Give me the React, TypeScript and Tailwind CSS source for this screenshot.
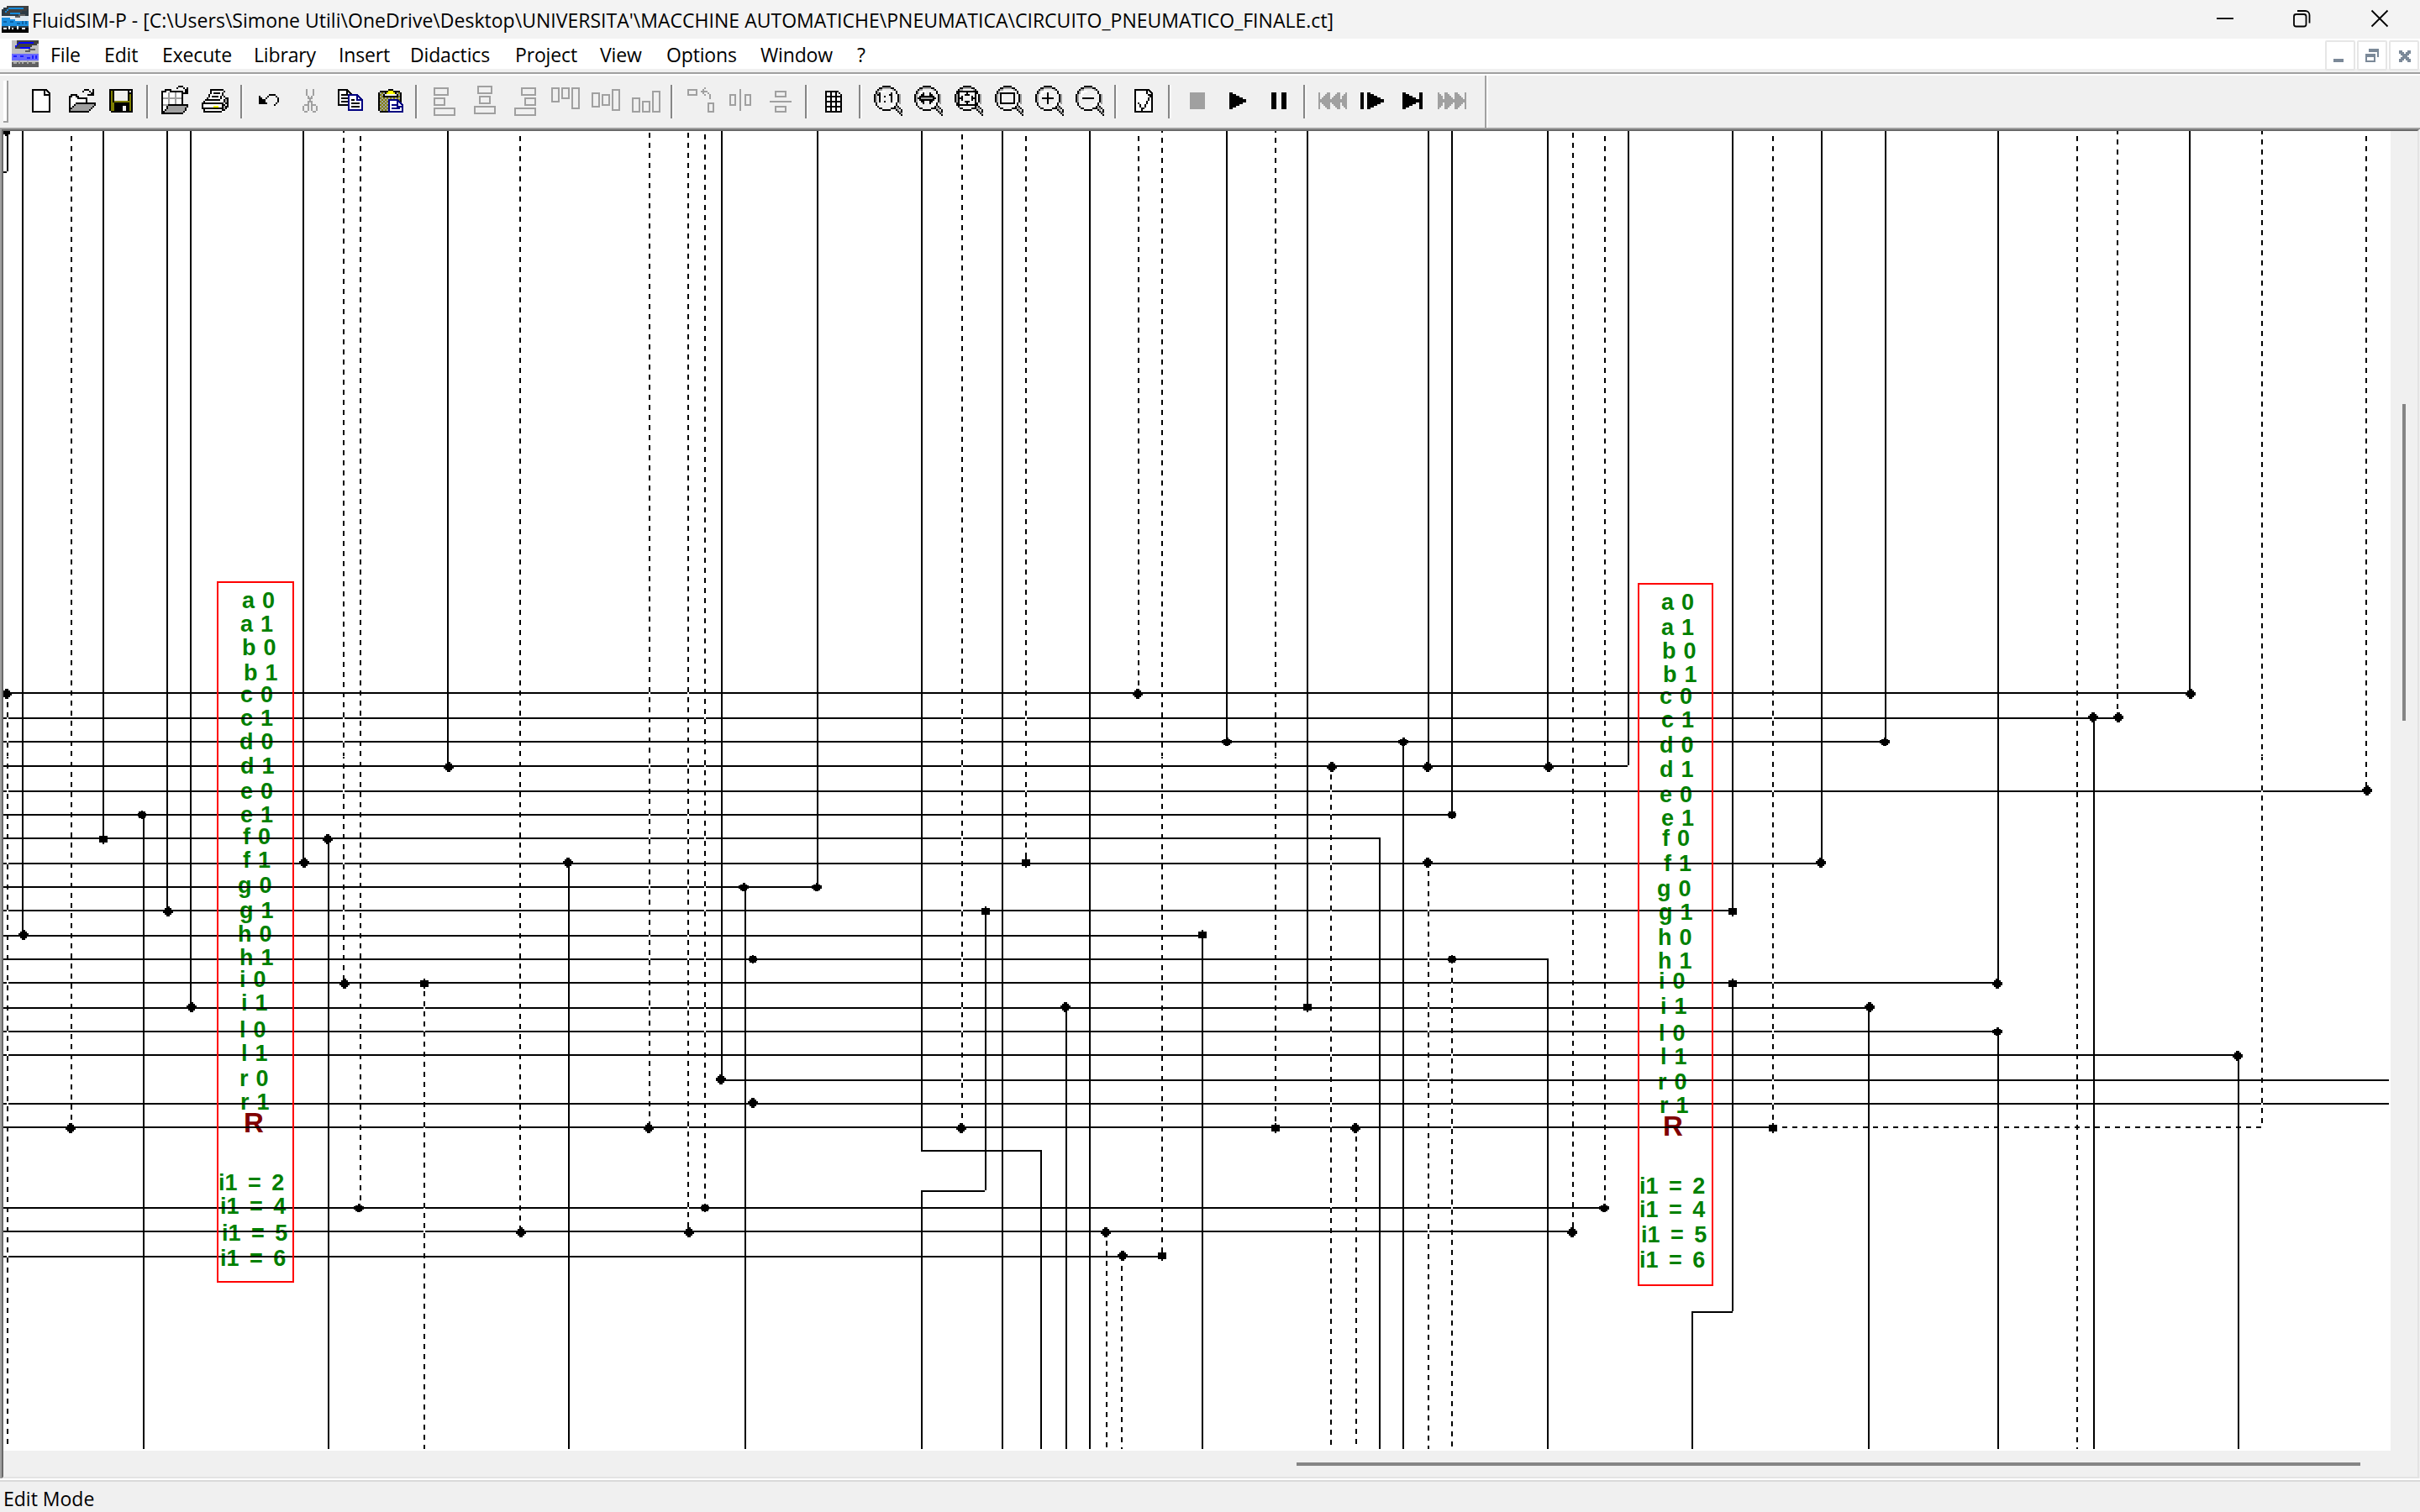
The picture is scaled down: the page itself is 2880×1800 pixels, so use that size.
import React from "react";

type Seg = [number, number, number];

const GRAY = "#a0a0a0";

/* ---------- circuit data ---------- */

// [y, x start, x end]
const horizontals: Seg[] = [
  [824, 4, 2605], [854, 4, 2519], [882, 4, 2243], [911, 4, 1937], [941, 4, 2815], [969, 4, 1728],
  [997, 4, 1643], [1027, 4, 2167], [1055, 4, 972], [1083, 4, 2061], [1113, 4, 1430], [1141, 4, 1843],
  [1169, 4, 2377], [1199, 4, 2223], [1227, 4, 2377], [1255, 4, 2663], [1285, 858, 2843], [1313, 4, 2843],
  [1341, 4, 2109], [1437, 4, 1909], [1465, 4, 1871], [1495, 4, 1382], [1369, 1096, 1240], [1417, 1096, 1172],
  [1561, 2013, 2062],
];

// [x, y start, y end]
const verticals: Seg[] = [
  [26, 156, 1113], [122, 156, 998], [198, 156, 1084], [226, 156, 1200], [360, 156, 1028], [532, 156, 912],
  [858, 156, 1286], [972, 156, 1056], [1096, 156, 1371], [1192, 156, 1725], [1296, 156, 1725], [1459, 156, 883],
  [1555, 156, 1199], [1699, 156, 912], [1727, 156, 970], [1841, 156, 912], [1937, 156, 911], [2061, 156, 1084],
  [2167, 156, 1028], [2243, 156, 883], [2377, 156, 1171], [2605, 156, 826],
  [170, 970, 1725], [390, 998, 1725], [676, 1028, 1725], [886, 1056, 1725], [1096, 1417, 1725], [1172, 1084, 1417],
  [1238, 1369, 1725], [1268, 1199, 1725], [1430, 1113, 1725], [1641, 997, 1725], [1669, 883, 1725],
  [1841, 1141, 1725], [2061, 1171, 1561], [2013, 1561, 1725], [2223, 1200, 1725], [2377, 1228, 1725],
  [2491, 855, 1725], [2663, 1256, 1725],
];

// [x, y start, y end, first dash, opaque gaps]
const dashed: [number, number, number, number, boolean][] = [
  [84, 156, 1342, 162, false], [408, 156, 1170, 152, true], [428, 156, 1438, 162, false],
  [618, 156, 1466, 162, false], [772, 156, 1342, 158, true], [818, 156, 1466, 158, true],
  [838, 156, 1438, 160, true], [1144, 156, 1342, 160, true], [1220, 156, 1027, 162, true],
  [1354, 156, 824, 162, false], [1382, 156, 1495, 152, false], [1517, 156, 1342, 152, false],
  [1871, 156, 1466, 158, false], [1909, 156, 1438, 162, false], [2109, 156, 1342, 162, true],
  [2471, 156, 1725, 162, false], [2519, 156, 854, 154, false], [2691, 156, 1341, 154, true],
  [2815, 156, 942, 162, false],
  [8, 828, 1725, 824, true], [504, 1172, 1725, 1168, true], [1316, 1468, 1725, 1465, false],
  [1334, 1497, 1725, 1495, false], [1583, 914, 1725, 910, true], [1613, 1343, 1725, 1341, false],
  [1699, 1029, 1725, 1025, true], [1727, 1143, 1725, 1140, true],
];

const nodes: Record<string, [number, number][]> = {
  d: [
    [8, 826], [534, 913], [362, 1027], [390, 999], [676, 1027], [200, 1085], [28, 1113], [228, 1199], [410, 1171],
    [84, 1343], [772, 1343], [896, 1313], [858, 1285], [620, 1467], [820, 1467], [1354, 826], [1585, 913],
    [1699, 913], [1699, 1027], [1268, 1199], [1144, 1343], [1613, 1343], [1316, 1467], [1336, 1495], [2607, 826],
    [2491, 854], [2521, 854], [1843, 913], [2167, 1027], [2377, 1171], [2225, 1199], [2663, 1257], [1871, 1467],
    [2817, 941],
  ],
  w: [[1460, 883], [885, 1056], [972, 1056], [2243, 883], [2377, 1228], [1909, 1438], [427, 1438], [1670, 883]],
  s: [
    [123, 999], [1221, 1027], [1173, 1085], [1431, 1113], [1383, 1495], [1556, 1199], [1518, 1343], [2062, 1085],
    [2062, 1171], [505, 1171], [2110, 1343],
  ],
  o: [[169, 970], [1728, 970], [1728, 1142], [896, 1142], [839, 1438]],
};

const nodeShape: Record<string, string> = {
  d: "M-2-6h4v2h2v2h2v4h-2v2h-2v2h-4v-2h-2v-2h-2v-4h2v-2h2z",
  w: "M-1-5h3v2h2v1h2v4h-2v2h-2v1h-4v-1h-2v-2h-2v-4h2v-1h3z",
  s: "M-1-6h2v2h4v8h-4v2h-2v-2h-4v-8h4z",
  o: "M-1-5h2v1h3v2h1v4h-1v2h-3v1h-2v-1h-3v-2h-1v-4h1v-2h3z",
};

type Label = [string, number, number];

const leftLabels: Label[] = [
  ["a 0", 288, 724], ["a 1", 286, 752], ["b 0", 289, 780], ["b 1", 291, 810], ["c 0", 286, 836], ["c 1", 286, 864],
  ["d 0", 285, 892], ["d 1", 286, 921], ["e 0", 286, 951], ["e 1", 286, 979], ["f 0", 288, 1005], ["f 1", 288, 1033],
  ["g 0", 283, 1063], ["g 1", 285, 1093], ["h 0", 284, 1121], ["h 1", 286, 1149], ["i 0", 286, 1175],
  ["i 1", 288, 1203], ["l 0", 286, 1235], ["l 1", 288, 1263], ["r 0", 286, 1293], ["r 1", 287, 1321],
  ["i1 = 2", 261, 1417], ["i1 = 4", 263, 1445], ["i1 = 5", 265, 1477], ["i1 = 6", 263, 1507],
];

const rightLabels: Label[] = [
  ["a 0", 1977, 726], ["a 1", 1977, 756], ["b 0", 1979, 784], ["b 1", 1980, 812], ["c 0", 1975, 838],
  ["c 1", 1977, 866], ["d 0", 1975, 896], ["d 1", 1975, 925], ["e 0", 1975, 955], ["e 1", 1977, 983],
  ["f 0", 1977, 1007], ["f 1", 1979, 1037], ["g 0", 1972, 1067], ["g 1", 1974, 1095], ["h 0", 1974, 1125],
  ["h 1", 1974, 1153], ["i 0", 1975, 1177], ["i 1", 1977, 1207], ["l 0", 1975, 1239], ["l 1", 1977, 1267],
  ["r 0", 1974, 1297], ["r 1", 1976, 1325],
  ["i1 = 2", 1952, 1421], ["i1 = 4", 1952, 1449], ["i1 = 5", 1954, 1479], ["i1 = 6", 1952, 1509],
];

const bearing = (t: string) => ("bhilr".includes(t[0]) ? 1 : t[0] === "f" ? -1 : 0);

function DashedWire({ x, y1, y2, phase, opaque }: { x: number; y1: number; y2: number; phase: number; opaque: boolean }) {
  const parts: [number, number, number][] = [];
  if (y1 < 900) {
    parts.push([y1, Math.min(y2, 900), phase]);
    if (y2 > 900) parts.push([901, y2, phase + 1]);
  } else parts.push([y1, y2, phase]);
  return (
    <>
      {opaque && <rect x={x} y={y1} width={2} height={y2 - y1} fill="#fff" />}
      {parts.map(([a, b, p]) => (
        <line
          key={a}
          x1={x + 1}
          x2={x + 1}
          y1={a}
          y2={b}
          stroke="#000"
          strokeWidth={2}
          strokeDasharray="6 6"
          strokeDashoffset={(((a - p) % 12) + 12) % 12}
        />
      ))}
    </>
  );
}

function Circuit() {
  return (
    <svg className="block" width={2841} height={1571} viewBox="4 156 2841 1571" shapeRendering="crispEdges">
      <g fontFamily="'Liberation Sans', Arial, sans-serif" fontWeight={700} fontSize={27} fill="#008000">
        {[...leftLabels, ...rightLabels].map(([t, x, y]) => (
          <text key={`${x}-${y}`} x={x - bearing(t)} y={y} style={{ wordSpacing: t.length > 3 ? 5 : 1.5 }}>
            {t}
          </text>
        ))}
        <text x={290} y={1348} fontSize={33} fill="#800000">R</text>
        <text x={1979} y={1352} fontSize={33} fill="#800000">R</text>
      </g>
      {dashed.filter((d) => !d[4]).map((d, i) => (
        <DashedWire key={i} x={d[0]} y1={d[1]} y2={d[2]} phase={d[3]} opaque={false} />
      ))}
      {horizontals.map(([y, a, b]) => (
        <rect key={`${y}-${a}`} x={a} y={y} width={b - a} height={2} />
      ))}
      <line x1={2109} x2={2693} y1={1342} y2={1342} stroke="#000" strokeWidth={2} strokeDasharray="6 6" />
      {dashed.filter((d) => d[4]).map((d, i) => (
        <DashedWire key={i} x={d[0]} y1={d[1]} y2={d[2]} phase={d[3]} opaque />
      ))}
      {verticals.map(([x, a, b]) => (
        <rect key={`${x}-${a}`} x={x} y={a} width={2} height={b - a} />
      ))}
      <path d="M4 156h8v4h-2v44h-2v2h-4v-2h4v-42h-2v-2h-2z" />
      {Object.entries(nodes).map(([kind, pts]) =>
        pts.map(([x, y]) => <path key={`${x}-${y}`} d={nodeShape[kind]} transform={`translate(${x} ${y})`} />)
      )}
      <g fill="none" stroke="#f00" strokeWidth={2}>
        <rect x={259} y={693} width={90} height={833} />
        <rect x={1950} y={695} width={88} height={835} />
      </g>
    </svg>
  );
}

/* ---------- toolbar ---------- */

function Cell({ children }: { children: React.ReactNode }) {
  return (
    <svg className="h-[62px] w-12 shrink-0" viewBox="0 0 24 31" shapeRendering="crispEdges" fill="none" stroke="none">
      {children}
    </svg>
  );
}

const Sep = () => <div className="mx-1.5 h-10 w-1 shrink-0 border-l-2 border-[#868686] bg-[#f8f8f8]" />;

// Outlined boxes given as [x, y, w, h] in icon pixels
function Boxes({ list }: { list: number[][] }) {
  return (
    <g stroke={GRAY}>
      {list.map(([x, y, w, h]) => (
        <rect key={`${x}-${y}`} x={x + 0.5} y={y + 0.5} width={w - 1} height={h - 1} />
      ))}
    </g>
  );
}

function Lens({ children }: { children?: React.ReactNode }) {
  return (
    <Cell>
      <path d="M8 6h7v1h2v1h1v2h1v7h-1v2h-1v1h-2v1H8v-1H6v-1H5v-2H4v-7h1V8h1V7h2z" fill="#f0f0f0" />
      <path d="M9 7h5v1H9zM7 8h2v1H7zM6 9h1v2H6zM5 11h1v5H5zM15 8h1v1h-1zM19 11h1v6h-1zM18 18h1v1h-1z" fill={GRAY} />
      <path d="M8 9h3v1H9v1H8v1H7v-2h1zM14 17h2v-2h1v3h-3z" fill="#fff" />
      <path
        d="M9 6h5v1H9zM7 7h2v1H7zM14 7h2v1h-2zM6 8h1v1H6zM16 8h1v1h-1zM5 9h1v2H5zM17 9h1v2h-1zM4 11h1v5H4zM18 11h1v5h-1zM5 16h1v2H5zM17 16h1v2h-1zM6 18h1v1H6zM16 18h1v1h-1zM7 19h2v1H7zM14 19h2v1h-2zM9 20h5v1H9z"
        fill="#000"
      />
      <path d="M17 18h1v1h1v2h1v1h1v1h-1v-1h-1v-1h-1v-1h-1z" fill={GRAY} />
      <path d="M16 19h1v1h1v1h1v1h1v1h-1v-1h-1v-1h-1v-1h-1zM18 18h1v1h1v1h1v1h-1v-1h-1v-1h-1zM20 21h1v1h-1zM20 23h1v1h-1z" fill="#000" />
      {children}
    </Cell>
  );
}

function Toolbar() {
  return (
    <div className="flex h-[62px] shrink-0 items-center bg-[#f0f0f0]">
      <div className="mr-3.5 ml-1 h-[50px] w-1.5 border-r-2 border-b-2 border-[#a0a0a0] bg-white" />
      <Cell>
        <path d="M7.5 8.5h8l2 2v11h-10z" fill="#fff" stroke="#000" />
        <path d="M14.5 8.5v3h3" stroke="#000" />
      </Cell>
      <Cell>
        <path d="M5.5 20.5v-8h1v-1h3v1h1v1h5v3" fill="#fff" stroke="#000" />
        <path d="M5 21h1v-1h1v-1h1v-1h1v-1h12v1h-1v1h-1v1h-1v1h-1v1H5z" fill={GRAY} />
        <path d="M9 16h12v1H9zM8 17h1v1H8zM7 18h1v1H7zM6 19h1v1H6zM5 20h1v1H5zM5 21h12v1H5zM17 20h1v1h-1zM18 19h1v1h-1zM19 18h1v1h-1zM20 17h1v1h-1z" fill="#000" />
        <path d="M13 9h1v1h-1zM14 8h3v1h-3zM17 9h1v1h-1zM18 10h1v1h-1zM19 8h1v4h-4v-1h2v-1h1z" fill="#000" />
      </Cell>
      <Cell>
        <path d="M5 8h14v14H6v-1H5z" fill="#000" />
        <path d="M6 9h1v7h1v5H6zM17 11h1v10h-1zM8 15h9v1H8z" fill="#808000" />
        <path d="M8 9h8v6H8zM17 9h1v1h-1zM13 18h2v3h-2z" fill="#f0f0f0" />
      </Cell>
      <Sep />
      <Cell>
        <path d="M4.5 22.5v-13h2v-1h3v1h7v8" fill="#fff" stroke="#000" />
        <path d="M8 10h1v9H8zM12 10h1v8h-1zM5 13h11v1H5zM5 17h5v1H5z" fill={GRAY} />
        <path d="M5 22v-1h1v-1h1v-1h1v-1h12v1h-1v1h-1v1h-1v1h-1v1H5z" fill={GRAY} />
        <path d="M8 17h12v1H8zM7 18h1v2H7zM6 20h1v1H6zM5 21h1v1H5zM4 22h13v1H4zM17 21h1v1h-1zM18 19h1v2h-1zM19 18h1v1h-1z" fill="#000" />
        <path d="M13 7h1v1h-1zM14 6h3v1h-3zM17 7h1v1h-1zM18 8h1v1h-1zM19 7h1v4h-4v-1h2V9h1z" fill="#000" />
      </Cell>
      <Cell>
        <path d="M5 15h3l2-7h8l-2 6h3l1 2v3l-3 3H5l-1-2v-3z" fill="#fff" />
        <path d="M9 8h8v1H9zM9 9h1v2H9zM8 11h1v2H8zM7 13h1v1H7zM17 9h1v1h-1zM16 10h1v2h-1zM15 12h1v2h-1zM11 10h4v1h-4zM10 12h4v1h-4zM6 14h9v1H6zM5 15h1v1H5zM4 16h13v1H4zM17 14h1v2h-1zM18 13h1v1h-1zM17 12h1v1h-1zM19 13h1v6h-1zM4 17h1v3H4zM5 19h12v1H5zM16 17h1v4h-1zM5 21h11v1H5zM5 20h1v1H5zM17 20h1v1h-1zM18 18h1v2h-1zM17 17h1v1h-1zM18 16h1v1h-1z" fill="#000" />
        <path d="M18 14h1v2h-1zM17 18h1v2h-1z" fill={GRAY} />
        <path d="M11 18h3v1h-3z" fill="#ffff00" />
      </Cell>
      <Sep />
      <Cell>
        <path d="M6 12h1v1h1v1h1v1h1v1h1v1H6zM9 14h1v-1h1v-1h1v1h-1v1h-1v1H9zM12 11h4v1h-4zM16 12h1v1h-1zM17 13h1v3h-1zM16 16h1v1h-1zM15 17h1v1h-1z" fill="#000" />
      </Cell>
      <Cell>
        <path d="M10 8h1v4h-1zM14 8h1v4h-1zM11 12h1v2h-1zM13 12h1v2h-1zM12 13h1v3h-1zM11 15h1v3h-1zM13 15h1v3h-1zM9 17h2v1H9zM8 18h1v3H8zM9 21h2v1H9zM11 18h1v3h-1zM14 17h2v1h-2zM13 18h1v3h-1zM14 21h2v1h-2zM16 18h1v3h-1z" fill={GRAY} />
      </Cell>
      <Cell>
        <path d="M5.5 8.5h5l3 3v6h-8z" fill="#fff" stroke="#000" />
        <path d="M7 11h3v1H7zM7 13h4v1H7zM7 15h4v1H7zM10 9h1v3h-1z" fill="#000" />
        <path d="M11.5 11.5h5l3 3v6h-8z" fill="#fff" stroke="#000080" />
        <path d="M16.5 11.5v3h3" stroke="#000080" />
        <path d="M13 14h2v1h-2zM13 16h5v1h-5zM13 18h5v1h-5z" fill="#000" />
      </Cell>
      <Cell>
        <path d="M5 10h1V9h12v1h1v12H6v-1H5z" fill="#000" />
        <path d="M6 10h12v11H6z" fill="#808000" />
        <path
          d="M6.5 10v11M8.5 10v11M10.5 10v11M12.5 10v11M14.5 10v11M16.5 10v11M7.5 11v10M9.5 11v10M11.5 11v10M13.5 11v10M15.5 11v10M17.5 11v10"
          stroke={GRAY}
          strokeDasharray="1 1"
        />
        <path d="M8 11h1v-1h1V9h1V8h3v1h1v1h1v1h1v2H8z" fill="#000" />
        <path d="M11 9h3v1h1v1h-5v-1h1z" fill="#ffff00" />
        <path d="M9 11h7v1H9z" fill="#f0f0f0" />
        <path d="M11.5 14.5h5l3 3v4h-8z" fill="#fff" stroke="#000080" />
        <path d="M13 17h3v1h-3zM13 19h5v1h-5zM16 15h1v3h3v1h-4z" fill="#000080" />
      </Cell>
      <Sep />
      <Cell><Boxes list={[[6, 7, 9, 5], [6, 13, 7, 5], [6, 19, 13, 5]]} /></Cell>
      <Cell><Boxes list={[[8, 6, 9, 5], [9, 12, 7, 5], [6, 18, 13, 5]]} /></Cell>
      <Cell><Boxes list={[[10, 7, 9, 5], [12, 13, 7, 5], [6, 19, 13, 5]]} /></Cell>
      <Cell><Boxes list={[[4, 7, 5, 9], [10, 7, 5, 7], [16, 7, 5, 13]]} /></Cell>
      <Cell><Boxes list={[[4, 10, 5, 9], [10, 11, 5, 7], [16, 8, 5, 13]]} /></Cell>
      <Cell><Boxes list={[[4, 13, 5, 9], [10, 15, 5, 7], [16, 9, 5, 13]]} /></Cell>
      <Sep />
      <Cell>
        <Boxes list={[[5, 8, 6, 4], [17, 16, 4, 6]]} />
        <path d="M13 9h4v1h-4zM14 8h1v3h-1zM15 7h1v1h-1zM15 11h1v1h-1zM17 10h1v1h-1zM18 11h1v3h-1z" fill={GRAY} />
      </Cell>
      <Cell>
        <Boxes list={[[6, 11, 4, 7], [15, 11, 4, 7]]} />
        <path d="M12 8h1v13h-1z" fill={GRAY} />
      </Cell>
      <Cell>
        <Boxes list={[[9, 9, 7, 4], [9, 18, 7, 4]]} />
        <path d="M6 15h13v1H6z" fill={GRAY} />
      </Cell>
      <Sep />
      <Cell>
        <path d="M7 9h8v1h1v1h1v11H7z" fill="#000" />
        <path d="M8 10h2v2H8zM11 10h2v2h-2zM14 10h1v1h1v1h-2zM8 13h2v2H8zM11 13h2v2h-2zM14 13h2v2h-2zM8 16h2v2H8zM11 16h2v2h-2zM14 16h2v2h-2zM8 19h2v2H8zM11 19h2v2h-2zM14 19h2v2h-2z" fill="#fff" />
      </Cell>
      <Sep />
      <Lens>
        <path d="M7 10h1v6H7zM6 11h1v1H6zM14 10h1v6h-1zM13 11h1v1h-1zM10 12h1v1h-1zM10 15h1v1h-1z" fill="#000" />
      </Lens>
      <Lens>
        <path d="M9 12h5v3H9z" fill={GRAY} />
        <path d="M6 13h1v1H6zM7 12h1v3H7zM8 11h1v5H8zM9 10h1v2H9zM13 10h1v2h-1zM9 12h5v1H9zM9 14h5v1H9zM9 15h1v2H9zM13 15h1v2h-1zM14 11h1v5h-1zM15 12h1v3h-1zM16 13h1v1h-1z" fill="#000" />
        <path d="M8 13h7v1H8z" fill={GRAY} />
      </Lens>
      <Lens>
        <path d="M6.5 9.5h10v8h-10z" stroke="#000" />
        <path d="M11 10h1v1h1v1h-3v-1h1zM11 17h1v-1h1v-1h-3v1h1zM7 13h1v-1h1v3H8v-1H7zM16 13h-1v-1h-1v3h1v-1h1z" fill="#000" />
      </Lens>
      <Lens><path d="M7.5 10.5h8v6h-8z" stroke="#000" /></Lens>
      <Lens><path d="M8 13h7v1H8zM11 10h1v7h-1z" fill="#000" /></Lens>
      <Lens><path d="M8 13h7v1H8z" fill="#000" /></Lens>
      <Sep />
      <Cell>
        <path d="M7.5 8.5h8l2 2v11h-10z" fill="#fff" stroke="#000" />
        <path d="M14 9h1v2h3v1h-3v-1h-1zM16 12h1v1h-1zM15 13h1v2h-1zM14 15h1v2h-1zM13 17h1v2h-1zM12 19h1v1h-1zM11 19h1v2h-1zM10 17h1v2h-1zM9 16h1v1H9z" fill="#000" />
      </Cell>
      <Sep />
      <Cell><path d="M8 10h9v10H8z" fill={GRAY} /></Cell>
      <div className="w-px" />
      <Cell><path d="M7 10h2v1h2v1h2v1h2v1h2v2h-2v1h-2v1h-2v1H9v1H7z" fill="#000" /></Cell>
      <Cell><path d="M8 10h3v10H8zM14 10h3v10h-3z" fill="#000" /></Cell>
      <Sep />
      <Cell>
        <path d="M4 10h1v10H4zM5 14h1v-1h1v-1h1v-1h1v-1h2v4h1v-1h1v-1h1v-1h1v-1h2v4h1v-2h1v-1h1v-1h1v10h-1v-1h-1v-1h-1v-2h-1v4h-2v-1h-1v-1h-1v-1h-1v-1h-1v4H9v-1H8v-1H7v-1H6v-1H5z" fill={GRAY} />
      </Cell>
      <Cell><path d="M5 10h2v10H5zM9 10h2v1h2v1h2v1h2v1h2v2h-2v1h-2v1h-2v1h-2v1H9z" fill="#000" /></Cell>
      <Cell><path d="M6 10h2v1h2v1h2v1h2v1h2v-4h2v10h-2v-4h-2v1h-2v1h-2v1H8v1H6z" fill="#000" /></Cell>
      <Cell>
        <path transform="translate(24 0) scale(-1 1)" d="M4 10h1v10H4zM5 14h1v-1h1v-1h1v-1h1v-1h2v4h1v-1h1v-1h1v-1h1v-1h2v4h1v-2h1v-1h1v-1h1v10h-1v-1h-1v-1h-1v-2h-1v4h-2v-1h-1v-1h-1v-1h-1v-1h-1v4H9v-1H8v-1H7v-1H6v-1H5z" fill={GRAY} />
      </Cell>
      <div className="ml-3.5 h-full w-1 border-l-2 border-[#a0a0a0] bg-white" />
    </div>
  );
}

/* ---------- title and menu ---------- */

function AppIcon({ className, mono }: { className: string; mono?: boolean }) {
  const blue = mono ? "#0000ff" : "#1488d8";
  return (
    <svg className={className} viewBox="0 0 16 16" shapeRendering="crispEdges">
      <path d={mono ? "M0 0h16v16H0z" : "M0 2h1V1h2V0h13v16H0z"} fill={mono ? "#c0c0c0" : "#2c3a44"} />
      {!mono && <path d="M0 6h16v6H0z" fill="#dfe9f0" />}
      <path d="M3 0h13v2h-1v1h-3v1H9v1H2V3h1z" fill="#404040" />
      <path d="M4 1h9v1H4zM3 2h1v1H3zM2 3h1v1H2zM5 4h6v1H5z" fill={blue} />
      <path d="M10 5h4v1h-4zM8 6h3v1H8z" fill="#606060" />
      <path d={mono ? "M0 8h16v4H0z" : "M0 7h5v1h3v1h8v3H0z"} fill={mono ? "#6a6aff" : "#1c8fe0"} />
      <path d="M1 9h2v1H1zM5 9h2v1H5zM9 10h2v1H9zM12 9h1v2h-1zM14 9h1v2h-1z" fill={mono ? "#2020ff" : "#0b63a8"} />
      <path d="M0 13h16v3H0z" fill={mono ? "#606060" : "#000"} />
      <path d="M1 13h2v1H1zM4 12h1v2H4zM6 13h1v1H6zM9 12h1v2H9zM12 13h2v1h-2z" fill={mono ? "#a8a8a8" : "#e8f4ff"} />
    </svg>
  );
}

const menu: [string, string][] = [
  ["File", "w-[64px]"], ["Edit", "w-[69px]"], ["Execute", "w-[109px]"], ["Library", "w-[101px]"],
  ["Insert", "w-[85px]"], ["Didactics", "w-[125px]"], ["Project", "w-[101px]"], ["View", "w-[79px]"],
  ["Options", "w-[112px]"], ["Window", "w-[115px]"], ["?", "w-[30px]"],
];

function MdiButton({ children }: { children: React.ReactNode }) {
  return (
    <div className="flex h-9 w-9 items-center justify-center rounded-[2px] border-2 border-[#e6e6e6] bg-white">
      <svg className="h-8 w-8" viewBox="0 0 16 16" shapeRendering="crispEdges" fill="#7b8998">
        {children}
      </svg>
    </div>
  );
}

export default function App() {
  return (
    <div className="flex h-[1800px] w-[2880px] flex-col overflow-hidden bg-[#f0f0f0] font-['Open_Sans',sans-serif] text-black">
      <div className="flex h-[46px] shrink-0 items-center bg-[#f3f3f3]">
        <AppIcon className="ml-0.5 h-8 w-8" />
        <div className="ml-1 w-[1580px] pt-0.5 text-[23px] leading-[46px] tracking-[0.02px] whitespace-nowrap">
          FluidSIM-P - [C:\Users\Simone Utili\OneDrive\Desktop\UNIVERSITA'\MACCHINE AUTOMATICHE\PNEUMATICA\CIRCUITO_PNEUMATICO_FINALE.ct]
        </div>
        <svg className="ml-auto h-[46px] w-[270px]" viewBox="2610 0 270 46" fill="none" stroke="#000" strokeWidth={1.8}>
          <path d="M2638 22h20" />
          <rect x={2730} y={17} width={14.5} height={14.5} rx={2.5} />
          <path d="M2734 13h9.5a5 5 0 0 1 5 5v9.5" />
          <path d="M2822.5 12.5l19 19M2841.5 12.5l-19 19" />
        </svg>
      </div>
      <div className="flex h-[36px] shrink-0 bg-white">
        <AppIcon mono className="mt-0.5 ml-3.5 h-8 w-8" />
        <div className="ml-3.5 flex text-[23px] leading-[39px] tracking-[-0.15px]">
          {menu.map(([t, w]) => (
            <div key={t} className={`${w} shrink-0 whitespace-nowrap`}>{t}</div>
          ))}
        </div>
        <div className="mt-0.5 mr-px ml-auto flex gap-0.5">
          <MdiButton><path d="M4 10h6v2H4z" /></MdiButton>
          <MdiButton><path d="M6 4h6v5h-1V6H6zM4 7h6v5H4V7zM5 9v2h4V9z" fillRule="evenodd" /></MdiButton>
          <MdiButton><path d="M5 5h2v1h1v1h1V6h1V5h2v2h-1v1h-1v1h1v1h1v2h-2v-1H9v-1H8v1H7v1H5v-2h1V9h1V8H6V7H5z" /></MdiButton>
        </div>
      </div>
      <div className="h-2 shrink-0 border-b-2 border-white">
        <div className="h-1.5 border-b-2 border-[#a0a0a0]" />
      </div>
      <Toolbar />
      <div className="flex h-[1608px] shrink-0 flex-col border-t-2 border-l-2 border-[#a0a0a0]">
        <div className="mr-px flex grow border-2 border-t-[#696969] border-r-[#e3e3e3] border-b-[#e3e3e3] border-l-[#696969]">
          <div className="flex flex-col">
            <div className="h-[1571px] w-[2841px] bg-white">
              <Circuit />
            </div>
            <div className="mt-[14px] ml-[1539px] h-1 w-[1266px] bg-[#858585]" />
          </div>
          <div className="mt-[325px] ml-[14px] h-[377px] w-1 bg-[#858585]" />
        </div>
      </div>
      <div className="h-0.5 shrink-0 bg-white" />
      <div className="grow border-t-2 border-[#d9d9d9] pl-1 text-[23px] leading-[40px]">Edit Mode</div>
    </div>
  );
}
